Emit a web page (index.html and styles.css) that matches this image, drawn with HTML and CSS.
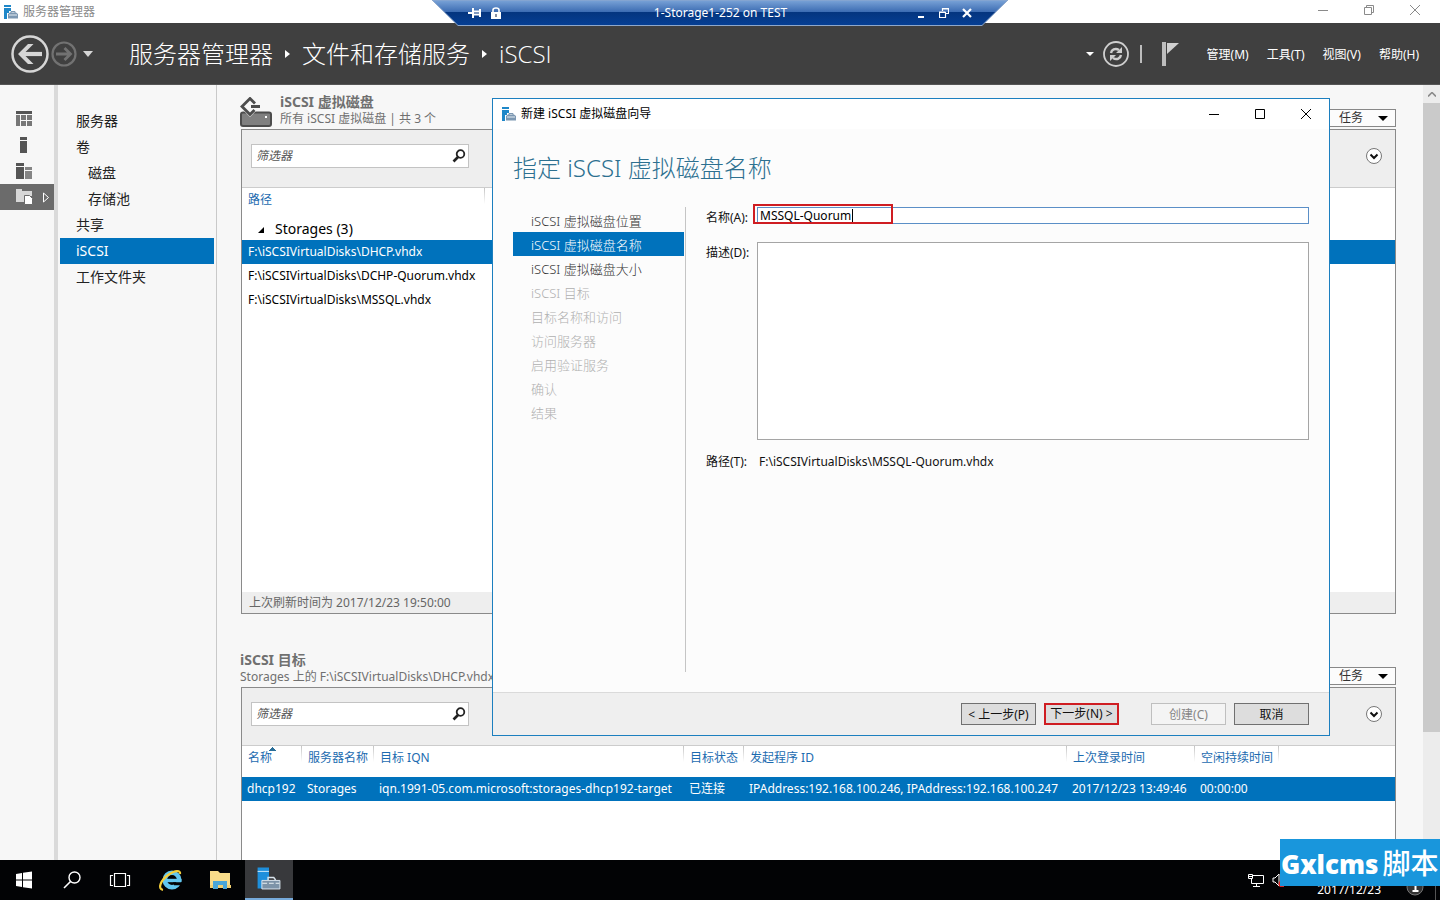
FILE: index.html
```html
<!DOCTYPE html>
<html lang="zh-CN">
<head>
<meta charset="utf-8">
<title>服务器管理器</title>
<link rel="stylesheet" href="styles.css">
</head>
<body>
<svg class="defs" aria-hidden="true">
  <symbol id="i-server" viewBox="0 0 16 16">
    <path d="M1 1h7v2H1zM1 4h7v3H6v2H4v6H1z" fill="#1f87c8"/>
    <path d="M8 9V7.500h4V9" fill="none" stroke="#7d98b2"/>
    <path d="M5 10l2-1.500h6l2 1.500v4.500H5z" fill="#7d98b2"/><path d="M6 11h8" stroke="#e6edf3"/>
  </symbol>
  <symbol id="i-search" viewBox="0 0 16 16">
    <circle cx="9.500" cy="6" r="3.800" fill="none" stroke="currentColor" stroke-width="1.800"/>
    <path d="M7 9l-4.500 4.500" stroke="currentColor" stroke-width="2.600"/>
  </symbol>
  <symbol id="i-chev" viewBox="0 0 16 16">
    <circle cx="8" cy="8" r="7.500" fill="#fff" stroke="#777"/>
    <path d="M4.500 6.500L8 10l3.500-3.500" fill="none" stroke="#111" stroke-width="2"/>
  </symbol>
</svg>

<header class="titlebar">
  <svg class="app-icon"><use href="#i-server"/></svg>
  <span class="titlebar-text">服务器管理器</span>
  <div class="window-buttons">
    <button aria-label="最小化"><svg viewBox="0 0 12 12"><path d="M1 6.500h10"/></svg></button>
    <button aria-label="还原"><svg viewBox="0 0 12 12"><path d="M1.500 3.500h7v7h-7zM3.500 3.500v-2h7v7h-2"/></svg></button>
    <button aria-label="关闭"><svg viewBox="0 0 12 12"><path d="M1 1l10 10M11 1L1 11"/></svg></button>
  </div>
</header>

<div class="banner">
  <button class="round-back" aria-label="后退"><svg viewBox="0 0 38 38"><circle cx="19" cy="19" r="17.500" fill="none" stroke="#d6d6d6" stroke-width="2.500"/><path d="M31 19H10" stroke="#d6d6d6" stroke-width="4.200"/><path d="M7 19L17 9h5.500l-10 10 10 10H17z" fill="#d6d6d6"/></svg></button>
  <button class="round-next" aria-label="前进"><svg viewBox="0 0 26 26"><circle cx="13" cy="13" r="11.500" fill="none" stroke="#727272" stroke-width="2.200"/><path d="M5 13h14M13.500 7l6 6-6 6" fill="none" stroke="#727272" stroke-width="2.800"/></svg></button>
  <svg class="nav-caret" viewBox="0 0 10 6"><path d="M0 0h10L5 6z" fill="#d6d6d6"/></svg>
  <nav class="crumbs">
    <a href="#">服务器管理器</a>
    <svg viewBox="0 0 5 8"><path d="M0 0l5 4-5 4z" fill="#fff"/></svg>
    <a href="#">文件和存储服务</a>
    <svg viewBox="0 0 5 8"><path d="M0 0l5 4-5 4z" fill="#fff"/></svg>
    <a href="#">iSCSI</a>
  </nav>
  <div class="banner-tools">
    <svg class="small-caret" viewBox="0 0 8 4"><path d="M0 0h8L4 4z" fill="#fff"/></svg>
    <button class="refresh" aria-label="刷新"><svg viewBox="0 0 26 26"><circle cx="13" cy="13" r="12" fill="none" stroke="#cfcfcf" stroke-width="1.800"/><path d="M8 12c.5-3 4-5.500 8-3M18 14c-.5 3-4 5.500-8 3" fill="none" stroke="#cfcfcf" stroke-width="2.400"/><path d="M19 6v6h-6zM7 20v-6h6z" fill="#cfcfcf"/></svg></button>
    <span class="bar"></span>
    <svg class="flag" viewBox="0 0 17 24"><path d="M0 0h4v24H0z" fill="#bdbdbd"/><path d="M5 1h12L5 12z" fill="#d0d0d0"/></svg>
    <button class="menu">管理(M)</button>
    <button class="menu">工具(T)</button>
    <button class="menu">视图(V)</button>
    <button class="menu">帮助(H)</button>
  </div>
</div>

<div class="remote-bar">
  <svg class="remote-shape" viewBox="0 0 576 27" preserveAspectRatio="none">
    <defs><linearGradient id="rg" x1="0" y1="0" x2="0" y2="1"><stop offset="0" stop-color="#7ba4d8"/><stop offset=".46" stop-color="#3d6db3"/><stop offset=".48" stop-color="#04357f"/><stop offset="1" stop-color="#063f94"/></linearGradient></defs>
    <path d="M0 0h576l-26 25.500H26z" fill="url(#rg)" stroke="#8fa8cb"/>
  </svg>
  <button class="pin" aria-label="固定"><svg viewBox="0 0 14 12"><path d="M0 6h5M5 1v10M5 4.500h7M5 7.500h7M12 2v8" fill="none" stroke="#fff" stroke-width="2"/></svg></button>
  <svg class="lock" viewBox="0 0 10 12"><path d="M0 5h10v7H0z" fill="#fff"/><path d="M2 5V3q0-2 3-2t3 2v2" fill="none" stroke="#fff" stroke-width="1.600"/><path d="M4.500 7h1v3h-1z" fill="#124"/></svg>
  <span class="remote-title">1-Storage1-252 on TEST</span>
  <div class="remote-buttons">
    <button aria-label="最小化"><svg viewBox="0 0 10 10"><path d="M2 9h6" stroke="#fff" stroke-width="2"/></svg></button>
    <button aria-label="还原"><svg viewBox="0 0 10 10"><path d="M.5 4.500h6v5h-6zM3.500 3V.5h6v5H7M0 4h6.500M3.500 1h6" fill="none" stroke="#fff" stroke-width="1.200"/></svg></button>
    <button aria-label="关闭"><svg viewBox="0 0 10 10"><path d="M1 1l8 8M9 1L1 9" stroke="#fff" stroke-width="2.200"/></svg></button>
  </div>
</div>

<main class="workspace">
  <nav class="rail" aria-label="视图">
    <button aria-label="仪表板"><svg viewBox="0 0 16 16"><path d="M0 0h16v3H0z" fill="#555"/><path d="M0 4h4v11H0zM5 4h5v5H5zM11 4h5v5h-5zM5 10h5v5H5zM11 10h5v5h-5z" fill="#777"/></svg></button>
    <button aria-label="本地服务器"><svg viewBox="0 0 16 16"><path d="M4 0h7v3H4zM4 4h7v12H4z" fill="#555"/></svg></button>
    <button aria-label="所有服务器"><svg viewBox="0 0 16 16"><path d="M0 0h8v3H0zM0 4h8v12H0z" fill="#555"/><path d="M9 4h7v3H9zM9 8h7v8H9z" fill="#858585"/></svg></button>
    <button class="active" aria-label="文件和存储服务"><svg class="wide" viewBox="0 0 34 18"><path d="M0 3V1h6v2h2v11H0zM8 3h8v5H8z" fill="#d7d7d7"/><path d="M8.500 7.500h5l3 3v6h-8z" fill="#fff" stroke="#6b6b6b"/><path d="M27.500 5l5 4.500-5 4.500z" fill="none" stroke="#fff"/></svg></button>
  </nav>
  <nav class="side">
    <a href="#">服务器</a>
    <a href="#">卷</a>
    <a class="sub" href="#">磁盘</a>
    <a class="sub" href="#">存储池</a>
    <a href="#">共享</a>
    <a class="current" href="#">iSCSI</a>
    <a href="#">工作文件夹</a>
  </nav>
  <div class="content">
    <section class="tile disks">
      <div class="tile-head">
        <svg class="disk-icon" viewBox="0 0 32 32"><path d="M1 17.500q0-2 2-2h26q2 0 2 2V27q0 2-2 2H3q-2 0-2-2z" fill="#808080" stroke="#4d4d4d" stroke-width="2"/><path d="M25 19h2v2h-2z" fill="#fff"/><path d="M3 10h14v3l-7 7-7-7z" fill="#f7f7f7"/><path d="M15 6.500L10 1.500 2 9.500l8 8 4.500-4.500M11 9.500h9" fill="none" stroke="#4d4d4d" stroke-width="2.800"/></svg>
        <div class="tile-title"><h2>iSCSI 虚拟磁盘</h2><p>所有 iSCSI 虚拟磁盘 | 共 3 个</p></div>
        <button class="tasks">任务<svg viewBox="0 0 10 5"><path d="M0 0h10L5 5z"/></svg></button>
      </div>
      <div class="panel">
        <div class="filter">
          <label class="search"><input type="text" placeholder="筛选器" aria-label="筛选器"><svg><use href="#i-search"/></svg></label>
          <button class="chev" aria-label="展开"><svg><use href="#i-chev"/></svg></button>
        </div>
        <table class="disk-table">
          <thead><tr><th class="path-col">路径</th><th></th></tr></thead>
          <tbody>
            <tr class="group"><td colspan="2"><svg viewBox="0 0 8 8"><path d="M7 1v6H1z"/></svg>Storages (3)</td></tr>
            <tr class="selected"><td colspan="2">F:\iSCSIVirtualDisks\DHCP.vhdx</td></tr>
            <tr><td colspan="2">F:\iSCSIVirtualDisks\DCHP-Quorum.vhdx</td></tr>
            <tr><td colspan="2">F:\iSCSIVirtualDisks\MSSQL.vhdx</td></tr>
          </tbody>
        </table>
        <footer class="refreshed">上次刷新时间为 2017/12/23 19:50:00</footer>
      </div>
    </section>
    <section class="tile targets">
      <div class="tile-head">
        <div class="tile-title"><h2>iSCSI 目标</h2><p>Storages 上的 F:\iSCSIVirtualDisks\DHCP.vhdx</p></div>
        <button class="tasks">任务<svg viewBox="0 0 10 5"><path d="M0 0h10L5 5z"/></svg></button>
      </div>
      <div class="panel">
        <div class="filter">
          <label class="search"><input type="text" placeholder="筛选器" aria-label="筛选器"><svg><use href="#i-search"/></svg></label>
          <button class="chev" aria-label="展开"><svg><use href="#i-chev"/></svg></button>
        </div>
        <table class="target-table">
          <colgroup><col class="c60"><col class="c72"><col class="c310"><col class="c60"><col class="c323"><col class="c128"><col class="c84"><col></colgroup>
          <thead><tr><th class="sorted">名称</th><th>服务器名称</th><th>目标 IQN</th><th>目标状态</th><th>发起程序 ID</th><th>上次登录时间</th><th>空闲持续时间</th><th></th></tr></thead>
          <tbody><tr class="selected"><td>dhcp192</td><td>Storages</td><td>iqn.1991-05.com.microsoft:storages-dhcp192-target</td><td>已连接</td><td>IPAddress:192.168.100.246, IPAddress:192.168.100.247</td><td>2017/12/23 13:49:46</td><td>00:00:00</td><td></td></tr></tbody>
        </table>
      </div>
    </section>
  </div>
  <div class="scroll"><svg viewBox="0 0 8 5"><path d="M0 4.500l4-4 4 4" fill="none" stroke="#8a8a8a" stroke-width="1.600"/></svg><span></span></div>
</main>

<div class="wizard" role="dialog" aria-labelledby="wiz-title">
  <header class="wizard-bar">
    <svg class="app-icon"><use href="#i-server"/></svg>
    <span id="wiz-title">新建 iSCSI 虚拟磁盘向导</span>
    <div class="window-buttons">
      <button aria-label="最小化"><svg viewBox="0 0 12 12"><path d="M1 6.500h10"/></svg></button>
      <button aria-label="最大化"><svg viewBox="0 0 12 12"><path d="M1.500 1.500h9v9h-9z"/></svg></button>
      <button aria-label="关闭"><svg viewBox="0 0 12 12"><path d="M1 1l10 10M11 1L1 11"/></svg></button>
    </div>
  </header>
  <h1>指定 iSCSI 虚拟磁盘名称</h1>
  <div class="wizard-body">
    <ol class="steps">
      <li>iSCSI 虚拟磁盘位置</li>
      <li class="current">iSCSI 虚拟磁盘名称</li>
      <li>iSCSI 虚拟磁盘大小</li>
      <li class="off">iSCSI 目标</li>
      <li class="off">目标名称和访问</li>
      <li class="off">访问服务器</li>
      <li class="off">启用验证服务</li>
      <li class="off">确认</li>
      <li class="off">结果</li>
    </ol>
    <form class="fields">
      <label for="name">名称(A):</label>
      <div class="name-field"><input id="name" type="text" value="MSSQL-Quorum"><span class="caret"></span><span class="mark"></span></div>
      <label for="desc">描述(D):</label>
      <textarea id="desc"></textarea>
      <span>路径(T):</span>
      <output>F:\iSCSIVirtualDisks\MSSQL-Quorum.vhdx</output>
    </form>
  </div>
  <footer class="wizard-foot">
    <button>&lt; 上一步(P)</button>
    <button class="next">下一步(N) &gt;</button>
    <button class="create" disabled>创建(C)</button>
    <button>取消</button>
  </footer>
</div>

<footer class="taskbar">
  <button aria-label="开始"><svg viewBox="0 0 48 40"><path d="M16 14l6-1v6.500h-6zM23 12.800l9-1.300v8h-9zM16 20.500h6V27l-6-1zM23 20.500h9v8l-9-1.300z" fill="#fff"/></svg></button>
  <button aria-label="搜索"><svg viewBox="0 0 48 40"><circle cx="26.500" cy="17.500" r="5.500" fill="none" stroke="#fff" stroke-width="1.400"/><path d="M22.500 21.500L16 28" stroke="#fff" stroke-width="1.600"/></svg></button>
  <button aria-label="任务视图"><svg viewBox="0 0 48 40"><path d="M18.500 13.500h11v13h-11zM17 15.500h-2.500v10H17M31 15.500h2.500v10H31" fill="none" stroke="#fff" stroke-width="1.200"/></svg></button>
  <button class="ie" aria-label="Internet Explorer"><svg viewBox="0 0 48 40"><circle cx="27" cy="20" r="7.200" fill="none" stroke="#62c7f0" stroke-width="4.600"/><path d="M22 20.500h14.500" stroke="#62c7f0" stroke-width="3.400"/><path d="M28 22.200h10v3h-9z" fill="#020305"/><path d="M18 30c-6-1-2-10 5-15s13-5 12-1" fill="none" stroke="#f5cf3b" stroke-width="2.200"/></svg></button>
  <button aria-label="文件资源管理器"><svg viewBox="0 0 48 40"><path d="M17 11h8l2 2h10v14H17z" fill="#f8dc8a"/><path d="M17 25h21v3H17z" fill="#f0cf72"/><path d="M20 29v-8h14v8h-4v-4h-5v4z" fill="#49a6d9"/></svg></button>
  <button class="running" aria-label="服务器管理器"><svg viewBox="0 0 48 40"><path d="M12 8h12v13h-6v9h-6z" fill="#1e8fdc"/><path d="M12 12h12" stroke="#d5ecfb"/><path d="M23 21v-2.500h6l2 2.500" fill="none" stroke="#d8e3ec" stroke-width="1.500"/><path d="M16.500 21.500h19v9h-19z" fill="#7d93a8" stroke="#dce7f0"/><path d="M17 24.500h18" stroke="#eef4f8" stroke-dasharray="5 2"/></svg></button>
  <div class="tray">
    <svg class="net" viewBox="0 0 16 13"><path d="M5 1.500h10.500v8H3.500V5M8.500 9.500v3M5 12.500h7M.5.500h4v4h-4zM1 2.500h3" fill="none" stroke="#fff"/></svg>
    <svg class="sound" viewBox="0 0 12 14"><path d="M1 5h2l4-4v12L3 9H1z" fill="none" stroke="#fff"/><circle cx="10" cy="11" r="3.500" fill="#d22"/></svg>
    <time>2017/12/23</time>
    <svg class="notice" viewBox="0 0 18 18"><circle cx="9" cy="9" r="8" fill="#333" stroke="#777"/><path d="M7 5h2.500v8M6.500 13h6" fill="none" stroke="#fff" stroke-width="2"/></svg>
    <span class="desk"></span>
  </div>
</footer>
<div class="watermark"><b>Gxlcms</b>脚本</div>
</body>
</html>
```
FILE: styles.css
```css
* { box-sizing: border-box; }
html, body { height: 100%; }
body {
  margin: 0; display: flex; flex-direction: column; position: relative; overflow: hidden;
  background: #f7f7f7; color: #222;
  font: 12px/16px "Noto Sans", "Noto Sans CJK SC", sans-serif;
}
button { margin: 0; padding: 0; border: 0; background: none; color: inherit; font: inherit; }
a { color: inherit; text-decoration: none; }
h1, h2, p, ol { margin: 0; padding: 0; font-weight: 400; list-style: none; }
svg { display: block; flex: none; }
.defs { position: absolute; width: 0; height: 0; }
.app-icon { width: 16px; height: 16px; }

.titlebar { flex: none; height: 23px; background: #fff; display: flex; align-items: center; gap: 4px; padding-left: 3px; color: #8a8a8a; }
.window-buttons { margin-left: auto; display: flex; }
.window-buttons button { width: 46px; display: flex; justify-content: center; }
.window-buttons svg { width: 12px; height: 12px; fill: none; stroke: currentColor; }
.titlebar .window-buttons { padding-right: 2px; padding-bottom: 3px; }

.banner { flex: none; height: 62px; background: #404040; color: #fff; display: flex; align-items: center; padding: 0 21px 0 11px; border-bottom: 1px solid #565656; }
.round-back svg { width: 38px; height: 38px; }
.round-next { margin-left: 2px; }
.round-next svg { width: 26px; height: 26px; }
.nav-caret { width: 10px; height: 6px; margin-left: 6px; }
.crumbs { display: flex; align-items: center; gap: 12px; margin-left: 36px; font: 300 24px/32px "Open Sans", "Noto Sans CJK SC", sans-serif; }
.crumbs svg { width: 5px; height: 8px; }
.banner-tools { margin-left: auto; display: flex; align-items: center; }
.small-caret { width: 8px; height: 4px; margin-right: 9px; }
.refresh svg { width: 26px; height: 26px; }
.bar { width: 2px; height: 18px; margin: 0 20px 0 11px; background: #bdbdbd; }
.flag { width: 17px; height: 24px; margin-right: 28px; }
.menu { padding-top: 2px; }
.menu + .menu { margin-left: 18px; }

.remote-bar { position: absolute; z-index: 1; top: 0; left: 50%; width: 576px; height: 27px; margin-left: -288px; display: flex; align-items: center; gap: 9px; padding: 0 36px 2px; color: #fff; }
.remote-shape { position: absolute; inset: 0; width: 100%; height: 100%; z-index: -1; }
.pin svg { width: 14px; height: 12px; }
.lock { width: 10px; height: 12px; }
.remote-title { flex: 1; text-align: center; padding-left: 24px; }
.remote-buttons { display: flex; gap: 13px; }
.remote-buttons svg { width: 10px; height: 10px; }

.workspace { flex: 1; min-height: 0; display: flex; }
.rail { flex: none; width: 58px; border-right: 4px solid #dadada; padding-top: 21px; }
.rail button { display: flex; align-items: center; width: 100%; height: 26px; padding-left: 16px; }
.rail svg { width: 16px; height: 16px; }
.rail .wide { width: 34px; height: 18px; }
.rail .active { background: #6b6b6b; }
.side { flex: none; width: 159px; border-right: 1px solid #c9c9c9; padding: 23px 2px 0; font-size: 14px; line-height: 26px; color: #222; }
.side a { display: block; padding-left: 16px; }
.side .sub { padding-left: 28px; }
.side .current { background: #0072bc; color: #fff; }

.content { flex: 1; min-width: 0; padding: 8px 27px 0 24px; overflow: hidden; }
.scroll { flex: none; width: 17px; background: #ececec; }
.scroll svg { width: 8px; height: 5px; margin: 7px auto 6px; }
.scroll span { display: block; height: 629px; background: #cacaca; }

.tile-head { display: flex; align-items: flex-end; height: 36px; color: #707070; }
.disk-icon { width: 32px; height: 32px; margin: 0 8px 0 -1px; }
.tile-title { flex: 1; padding-bottom: 2px; }
.tile-title h2 { font-size: 14px; line-height: 19px; font-weight: 700; }
.targets .tile-title { margin-left: -1px; }
.tasks { width: 68px; height: 18px; margin-bottom: 2px; padding: 0 7px 0 10px; border: 1px solid #888; background: #fcfcfc; color: #333; display: flex; align-items: center; justify-content: space-between; }
.tasks svg { width: 10px; height: 5px; }
.panel { border: 1px solid #8a8a8a; background: #fff; display: flex; flex-direction: column; }
.disks .panel { height: 485px; }
.targets { margin-top: 37px; }
.targets .panel { height: 190px; }
.filter { flex: none; height: 58px; padding: 0 13px 6px 9px; background: #eee; border-bottom: 1px solid #ccc; display: flex; align-items: center; justify-content: space-between; }
.search { width: 218px; height: 24px; padding: 0 1px 0 4px; border: 1px solid #c3c3c3; background: #fff; display: flex; align-items: center; }
.search input { flex: 1; min-width: 0; padding: 0; border: 0; font: italic 12px/16px "Noto Sans", "Noto Sans CJK SC", sans-serif; }
.search input::placeholder { color: #555; }
.search svg, .chev svg { width: 16px; height: 16px; }

table { width: 100%; border-collapse: collapse; table-layout: fixed; }
th, td { padding: 0 0 0 6px; text-align: left; font-weight: 400; height: 24px; white-space: nowrap; color: #000; }
th { color: #1c6bb0; background: linear-gradient(#c4c4c4, #fff) right top / 1px 16px no-repeat; vertical-align: top; padding-top: 4px; }
th:last-child { background: none; }
.disk-table th { height: 30px; }
.path-col { width: 243px; }
.group td { height: 22px; padding-left: 15px; font-size: 14px; }
.group svg { width: 8px; height: 8px; display: inline-block; margin-right: 10px; }
.selected td { background: #0072bc; color: #fff; }
.refreshed { margin-top: auto; height: 21px; padding: 3px 7px 2px; background: #eee; color: #666; }
.target-table th { height: 31px; }
.target-table td { padding-left: 5px; }
.target-table .sorted { background: linear-gradient(#c4c4c4, #fff) right top / 1px 16px no-repeat, conic-gradient(from 135deg at 50% 0, #2a6e98 90deg, transparent 0) 27px 1px / 7px 4px no-repeat; }
.c60 { width: 60px; } .c72 { width: 72px; } .c310 { width: 310px; } .c323 { width: 323px; } .c128 { width: 128px; } .c84 { width: 84px; }

.wizard { position: absolute; top: 98px; right: 110px; bottom: 164px; left: 492px; display: flex; flex-direction: column; border: 1px solid #1c7fbf; background: #fcfcfc; color: #111; }
.wizard-bar { flex: none; height: 30px; padding-left: 8px; display: flex; align-items: center; gap: 4px; background: #fff; color: #000; }
.wizard h1 { padding: 22px 20px 0; color: #2d7090; font-size: 24px; line-height: 34px; font-weight: 300; }
.wizard-body { flex: 1; min-height: 0; display: flex; padding: 22px 20px 20px; }
.steps { flex: none; width: 173px; border-right: 1px solid #c5c5c5; padding: 1px 1px 0 0; font-size: 13px; line-height: 22px; font-weight: 300; color: #333; }
.steps li { padding: 2px 0 0 18px; }
.steps .current { background: #0072bc; color: #fff; }
.steps .off { color: #b0b0b0; }
.fields { flex: 1; display: grid; grid-template-columns: 51px 1fr; align-content: start; align-items: start; padding-left: 20px; }
.fields label { padding-top: 3px; }
.name-field { position: relative; display: flex; margin-bottom: 18px; }
.name-field input { width: 100%; height: 17px; border: 1px solid #5b8fc7; background: #fff; padding: 0 2px; font: inherit; color: #000; }
.caret { position: absolute; left: 95px; top: 2px; width: 1px; height: 13px; background: #000; }
.mark { position: absolute; left: -4px; top: -3px; width: 140px; height: 20px; border: 2px solid #cf1d22; }
textarea { display: block; width: 100%; height: 198px; margin: 0 0 14px; border: 1px solid #a5a5a5; background: #fff; resize: none; font: inherit; }
output { padding-left: 2px; }
.wizard-foot { flex: none; height: 43px; padding: 0 20px; border-top: 1px solid #dadada; background: #efefef; display: flex; align-items: center; justify-content: flex-end; gap: 8px; }
.wizard-foot button { width: 75px; height: 22px; padding-top: 2px; border: 1px solid #707070; background: #ddd; white-space: nowrap; line-height: 18px; }
.wizard-foot .next { padding-top: 0; border: 2px solid #cf1d22; }
.wizard-foot .create { margin-left: 24px; border-color: #bfbfbf; background: #f4f4f4; color: #858585; }

.taskbar { flex: none; height: 40px; display: flex; background: #020305; color: #fff; }
.taskbar button { width: 48px; height: 40px; }
.taskbar button svg { width: 48px; height: 38px; }
.taskbar button:not(.running) svg { height: 40px; }
.taskbar .ie { margin-left: 1px; }
.taskbar .running { margin-left: 4px; background: #38393c; border-bottom: 2px solid #76aadb; }
.tray { margin-left: auto; display: flex; align-items: flex-end; }
.net { width: 16px; height: 13px; margin: 0 8px 13px 0; }
.sound { width: 12px; height: 14px; margin: 0 33px 13px 0; }
.tray time { margin-bottom: 2px; }
.notice { width: 18px; height: 18px; margin: 0 11px 4px 25px; }
.desk { width: 1px; height: 40px; margin-right: 4px; background: #555; }
.watermark { position: absolute; right: 0; bottom: 14px; width: 160px; height: 47px; padding-left: 1px; background: #1996dc; color: #fff; white-space: nowrap; font: 500 28px/47px "Noto Sans CJK SC", sans-serif; }
.watermark b { margin-right: 4px; font: 800 26px/47px "Open Sans", sans-serif; }
```
